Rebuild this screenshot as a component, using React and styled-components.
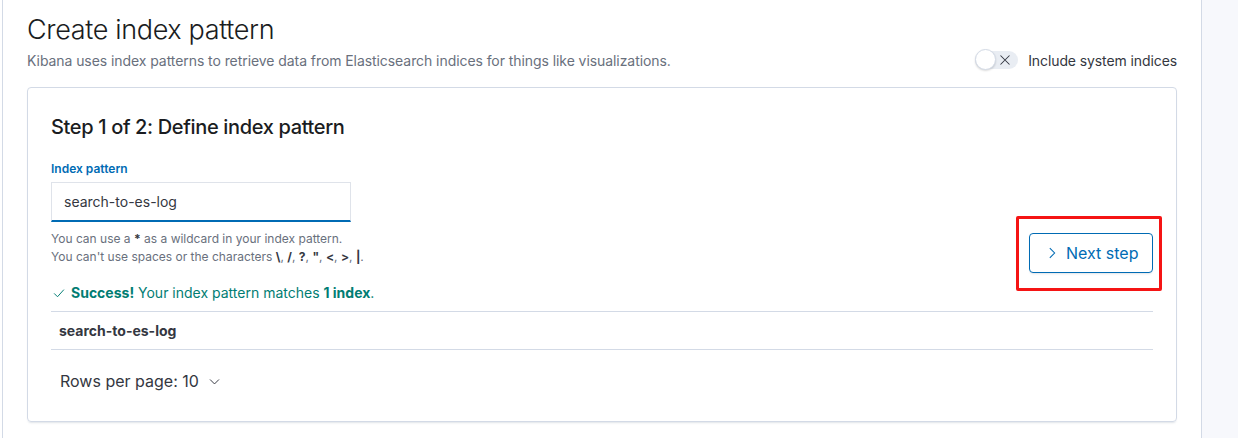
import React from "react";
import styled, { createGlobalStyle } from "styled-components";

const Global = createGlobalStyle`
  html, body { margin: 0; padding: 0; background: #fff; }
  body { font-family: Inter, "Noto Sans", "Liberation Sans", sans-serif; -webkit-font-smoothing: antialiased; }
  * { box-sizing: border-box; }
`;

const Page = styled.div`
  display: flex;
  width: 1238px;
  height: 438px;
  overflow: hidden;
  padding-left: 2px;
`;

const Main = styled.main`
  width: 1200px;
  border-left: 1px solid #d3dae6;
  border-right: 1px solid #d3dae6;
  padding: 10px 24px 0 24px;
`;

const Side = styled.aside`
  flex: 1;
  background: #f7f8fc;
`;

const HeaderRow = styled.div`
  display: flex;
  align-items: flex-end;
  justify-content: space-between;
`;

const Title = styled.h1`
  margin: 0;
  font-size: 27px;
  font-weight: 300;
  line-height: 40px;
  color: #1a1c21;
  letter-spacing: -0.35px;
`;

const Subtitle = styled.p`
  margin: 1px 0 0;
  font-size: 14px;
  line-height: 20px;
  color: #69707d;
  letter-spacing: -0.07px;
`;

const SwitchWrap = styled.label`
  display: flex;
  align-items: center;
  gap: 10px;
  font-size: 14px;
  color: #343741;
  margin-bottom: 2px;
  letter-spacing: -0.1px;
`;

const Track = styled.span`
  position: relative;
  display: flex;
  align-items: center;
  justify-content: flex-end;
  width: 43px;
  height: 18px;
  border-radius: 9px;
  background: #e9edf3;
  padding-right: 7px;
`;

const Knob = styled.span`
  position: absolute;
  left: 0;
  top: -2px;
  width: 21px;
  height: 21px;
  border-radius: 50%;
  background: #fff;
  border: 1px solid #d3dae6;
  box-shadow: 0 1px 2px rgba(0,0,0,0.15);
`;

const Card = styled.section`
  margin-top: 16px;
  border: 1px solid #d3dae6;
  border-radius: 4px;
  box-shadow: 0 2px 2px -1px rgba(152,162,179,0.3);
  padding: 23px 23px 30px 23px;
  height: 335px;
`;

const StepTitle = styled.h2`
  margin: 0;
  font-size: 20px;
  font-weight: 500;
  line-height: 32px;
  color: #1a1c21;
  letter-spacing: -0.35px;
`;

const FormRow = styled.div`
  display: flex;
  align-items: flex-end;
  justify-content: space-between;
  margin-top: 17px;
`;

const Field = styled.div`
  display: flex;
  flex-direction: column;
  padding-bottom: 7px;
`;

const Label = styled.label`
  font-size: 12px;
  font-weight: 600;
  line-height: 18px;
  color: #006bb4;
  margin-bottom: 4px;
`;

const Input = styled.div`
  width: 300px;
  height: 40px;
  display: flex;
  align-items: center;
  padding: 0 12px;
  font-size: 14px;
  color: #343741;
  background: #fff;
  border: 1px solid #dfe3ea;
  border-bottom: 2px solid #006bb4;
`;

const Help = styled.div`
  margin-top: 8px;
  font-size: 12px;
  line-height: 18px;
  color: #69707d;
  b { font-weight: 700; color: #343741; }
`;

const ButtonWrap = styled.div`
  position: relative;
`;

const Highlight = styled.div`
  position: absolute;
  left: -13px;
  top: -17px;
  width: 146px;
  height: 75px;
  border: 3px solid #f51414;
  border-radius: 2px;
  pointer-events: none;
`;

const Button = styled.button`
  display: flex;
  align-items: center;
  gap: 7px;
  width: 124px;
  height: 40px;
  padding: 0 0 0 15px;
  border: 1px solid #006bb4;
  border-radius: 4px;
  background: #fff;
  color: #006bb4;
  font-family: inherit;
  font-size: 16px;
  white-space: nowrap;
  box-shadow: 0 2px 2px -1px rgba(152,162,179,0.3);
`;

const Success = styled.div`
  display: flex;
  align-items: center;
  gap: 6px;
  margin-top: 10px;
  font-size: 14px;
  line-height: 20px;
  color: #017d73;
  padding-left: 2px;
  b { font-weight: 700; }
`;

const Table = styled.div`
  margin-top: 8px;
  border-top: 1px solid #d3dae6;
  border-bottom: 1px solid #d3dae6;
`;

const Row = styled.div`
  height: 37px;
  display: flex;
  align-items: center;
  padding-left: 8px;
  font-size: 14px;
  font-weight: 700;
  color: #343741;
`;

const Pager = styled.div`
  display: flex;
  align-items: center;
  gap: 9px;
  margin-top: 20px;
  padding-left: 9px;
  font-size: 16px;
  line-height: 22px;
  color: #343741;
`;

const Chevron = ({ dir = "right", size = 12, color = "currentColor" }) => (
  <svg width={size} height={size} viewBox="0 0 16 16" fill="none">
    {dir === "right" ? (
      <path d="M5.5 2.5L11 8l-5.5 5.5" stroke={color} strokeWidth="1.2" />
    ) : (
      <path d="M2.5 5.5L8 11l5.5-5.5" stroke={color} strokeWidth="1.2" />
    )}
  </svg>
);

const Check = () => (
  <svg width="12" height="12" viewBox="0 0 16 16" fill="none">
    <path d="M1.5 8.5L6 13l8.5-9.5" stroke="currentColor" strokeWidth="1.3" />
  </svg>
);

export default function App() {
  return (
    <>
      <Global />
      <Page>
        <Main>
          <HeaderRow>
            <div>
              <Title>Create index pattern</Title>
              <Subtitle>
                Kibana uses index patterns to retrieve data from Elasticsearch indices for things like visualizations.
              </Subtitle>
            </div>
            <SwitchWrap>
              <Track>
                <Knob />
                <svg width="12" height="12" viewBox="0 0 16 16">
                  <path d="M2 2l12 12M14 2L2 14" stroke="#343741" strokeWidth="1.4" />
                </svg>
              </Track>
              Include system indices
            </SwitchWrap>
          </HeaderRow>
          <Card>
            <StepTitle>Step 1 of 2: Define index pattern</StepTitle>
            <FormRow>
              <Field>
                <Label>Index pattern</Label>
                <Input>search-to-es-log</Input>
                <Help>
                  You can use a <b>*</b> as a wildcard in your index pattern.
                  <br />
                  You can't use spaces or the characters <b>\</b>, <b>/</b>, <b>?</b>, <b>"</b>, <b>&lt;</b>, <b>&gt;</b>, <b>|</b>.
                </Help>
              </Field>
              <ButtonWrap>
                <Button>
                  <Chevron dir="right" size={14} />
                  Next step
                </Button>
                <Highlight />
              </ButtonWrap>
            </FormRow>
            <Success>
              <Check />
              <span>
                <b>Success!</b> Your index pattern matches <b>1 index</b>.
              </span>
            </Success>
            <Table>
              <Row>search-to-es-log</Row>
            </Table>
            <Pager>
              Rows per page: 10
              <Chevron dir="down" size={13} />
            </Pager>
          </Card>
        </Main>
        <Side />
      </Page>
    </>
  );
}
